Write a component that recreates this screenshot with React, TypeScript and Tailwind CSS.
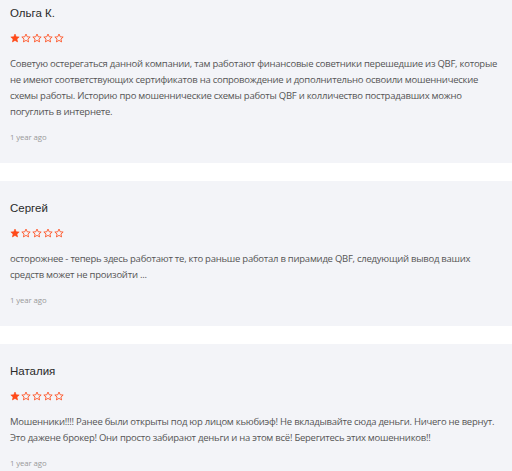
import React from "react";

const Star = ({ filled }: { filled: boolean }) => (
  <svg width="10" height="10" viewBox="0 0 24 24" className="block">
    <path
      d="M12 2.5l2.9 6.6 7.1.6-5.4 4.7 1.6 7-6.2-3.7-6.2 3.7 1.6-7L2 9.7l7.1-.6z"
      fill={filled ? "#ff4a1a" : "none"}
      stroke="#ff4a1a"
      strokeWidth={filled ? 1.5 : 2}
      strokeLinejoin="round"
    />
  </svg>
);

const reviews = [
  {
    name: "Ольга К.",
    text: "Советую остерегаться данной компании, там работают финансовые советники перешедшие из QBF, которые не имеют соответствующих сертификатов на сопровождение и дополнительно освоили мошеннические схемы работы. Историю про мошеннические схемы работы QBF и колличество пострадавших можно погуглить в интернете.",
  },
  {
    name: "Сергей",
    text: "осторожнее - теперь здесь работают те, кто раньше работал в пирамиде QBF, следующий вывод ваших средств может не произойти ...",
  },
  {
    name: "Наталия",
    text: "Мошенники!!!! Ранее были открыты под юр лицом кьюбиэф! Не вкладывайте сюда деньги. Ничего не вернут. Это дажене брокер! Они просто забирают деньги и на этом всё! Берегитесь этих мошенников!!",
  },
];

export default function App() {
  return (
    <div className="bg-white w-[512px] h-[471px] overflow-hidden">
      <div className="-mt-[14px] flex flex-col gap-[18px]">
        {reviews.map((r) => (
          <div key={r.name} className="bg-[#f3f4f8] pl-[10px] pr-[8px] pt-[17px] pb-[20px]">
            <div
              className="h-[20px] leading-[20px] text-[11.5px] text-[#2a2a2a]"
              style={{ fontFamily: '"Liberation Sans", Arial, sans-serif' }}
            >
              {r.name}
            </div>
            <div className="mt-[10px] h-[10px] flex gap-[1px]">
              {[0, 1, 2, 3, 4].map((i) => (
                <Star key={i} filled={i === 0} />
              ))}
            </div>
            <p
              className="mt-[13px] text-[9.5px] leading-[16px] tracking-[-0.25px] text-[#555]"
              style={{ fontFamily: '"Open Sans", sans-serif' }}
            >
              {r.text}
            </p>
            <div
              className="mt-[11px] h-[12px] leading-[12px] text-[7.8px] tracking-[-0.1px] text-[#999]"
              style={{ fontFamily: '"Open Sans", sans-serif' }}
            >
              1 year ago
            </div>
          </div>
        ))}
      </div>
    </div>
  );
}
